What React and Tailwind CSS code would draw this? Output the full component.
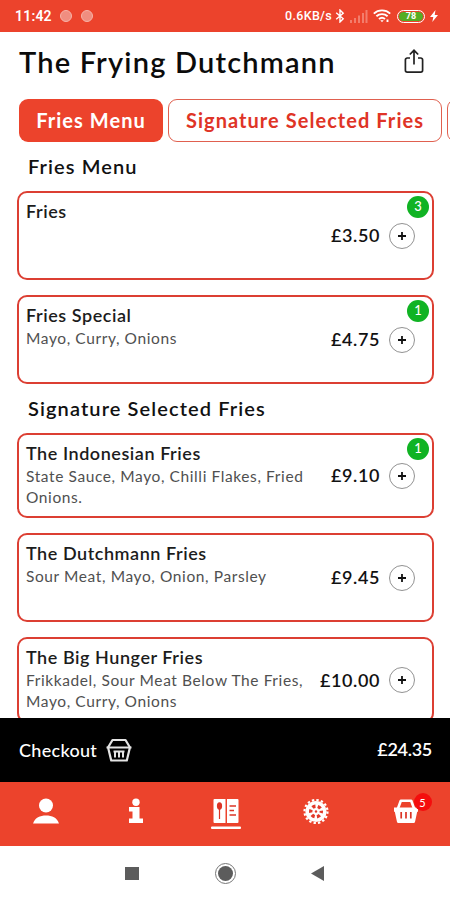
import React from 'react';

const MENU = [
  {
    title: 'Fries Menu',
    items: [
      { name: 'Fries', price: '£3.50', count: 3, height: 'h-[89px]' },
      { name: 'Fries Special', desc: 'Mayo, Curry, Onions', price: '£4.75', count: 1, height: 'h-[89px]' },
    ],
  },
  {
    title: 'Signature Selected Fries',
    items: [
      { name: 'The Indonesian Fries', desc: 'State Sauce, Mayo, Chilli Flakes, Fried Onions.', price: '£9.10', count: 1, height: 'h-[85px]' },
      { name: 'The Dutchmann Fries', desc: 'Sour Meat, Mayo, Onion, Parsley', price: '£9.45', height: 'h-[89px]' },
      { name: 'The Big Hunger Fries', desc: 'Frikkadel, Sour Meat Below The Fries, Mayo, Curry, Onions', price: '£10.00', height: 'h-[86px]' },
    ],
  },
];

function StatusBar() {
  return (
    <div className="flex h-8 shrink-0 items-center bg-[#ec432c] pl-[15px] pr-3 font-['Roboto',sans-serif] text-white">
      <span className="text-[14px] font-semibold tracking-[0.2px]">11:42</span>
      <span className="ml-2 h-3 w-3 rounded-full border border-[#f7b3a8] bg-[#f08e80]" />
      <span className="ml-[9px] h-3 w-3 rounded-full border border-[#f7b3a8] bg-[#f08e80]" />
      <span className="ml-auto text-[12.5px] font-medium tracking-[0.3px]">0.6KB/s</span>
      <svg className="ml-[3px]" width="10" height="14" viewBox="0 0 10 14" fill="none" stroke="white" strokeWidth="1.4">
        <path d="M1.2 3.8 8.2 9.8 5 13V1l3.2 3.2L1.2 10.2" />
      </svg>
      <svg className="ml-[5px]" width="18" height="13" viewBox="0 0 18 13" fill="#f37d6c">
        <path d="M0 10h2v3H0zM4 8h2v5H4zM8 5.500h2V13H8zM12 3h2v10h-2zM15.500 0h2v13h-2z" />
      </svg>
      <svg className="ml-[5px]" width="18" height="14" viewBox="0 0 18 14" fill="none" stroke="white" strokeWidth="1.9">
        <path d="M.8 4.600a12 12 0 0 1 16.400 0M3.400 7.300a8.200 8.200 0 0 1 11.200 0M6 10a4.500 4.500 0 0 1 6 0" />
        <path d="m7.300 11.300 1.700 2 1.700-2z" fill="white" stroke="none" />
        <path d="M14.500 10.500V13" />
      </svg>
      <span className="ml-[6px] flex h-[13px] w-7 items-center rounded-full border border-white p-px">
        <span className="flex h-full w-full items-center justify-center rounded-full bg-[#55ad25] text-[9px] font-bold leading-none">78</span>
      </span>
      <svg className="ml-[5px]" width="8" height="12" viewBox="0 0 8 12" fill="white">
        <path d="M5.500 0 0 7h3.300L2.300 12 8 5H4.700z" />
      </svg>
    </div>
  );
}

function Card({ item }) {
  return (
    <div className={`relative flex shrink-0 rounded-[10px] border-2 border-[#dc3f33] pl-[7px] pr-[17px] ${item.height}`}>
      <div className="w-[290px] pt-[7px]">
        <div className="pb-px text-[18px] font-semibold leading-[23px] tracking-[0.55px] text-[#1c1c1c]">{item.name}</div>
        <div className="text-[15.5px] leading-[21px] tracking-[0.6px] text-[#505050]">{item.desc}</div>
      </div>
      <div className="flex flex-1 items-center justify-end gap-[9px]">
        <span className="-ml-6 whitespace-nowrap text-[18px] font-semibold tracking-[0.6px] text-[#111]">{item.price}</span>
        <button className="flex h-[26px] w-[26px] shrink-0 items-center justify-center rounded-full border border-[#929292]">
          <svg width="8" height="8" viewBox="0 0 8 8" stroke="#111" strokeWidth="1.8">
            <path d="M4 0v8M0 4h8" />
          </svg>
        </button>
      </div>
      {item.count && (
        <span className="absolute right-[3px] top-[3px] flex h-[22px] w-[22px] items-center justify-center rounded-full bg-[#10b323] text-[13px] font-medium text-white">
          {item.count}
        </span>
      )}
    </div>
  );
}

function NavBar() {
  return (
    <nav className="grid h-16 shrink-0 grid-cols-5 justify-items-center bg-[#ec432c] pt-4 text-white">
      <svg className="ml-px" width="26" height="28" viewBox="0 0 26 28" fill="white">
        <circle cx="13" cy="7.500" r="7" />
        <path d="M0 25.500C2 19.500 7 17.500 13 17.500s11 2 13 8z" />
      </svg>
      <svg className="ml-px" width="16" height="26" viewBox="0 0 16 26" fill="white">
        <circle cx="8" cy="4.300" r="3.700" />
        <path d="M1 9h10.500v11.500H15V25H1v-4.500h3.500v-7H1z" />
      </svg>
      <svg className="ml-px" width="30" height="32" viewBox="0 0 30 32" fill="white">
        <path d="M3.500 1h11v24h-11a1 1 0 0 1-1-1V2a1 1 0 0 1 1-1zM16 1h10.500a1 1 0 0 1 1 1v22a1 1 0 0 1-1 1H16z" />
        <ellipse cx="8.500" cy="8" rx="2.600" ry="3.700" fill="#dc3426" />
        <path d="M8.500 11v10" stroke="#dc3426" strokeWidth="1.200" />
        <path d="M18.500 8H25M18.500 12.500H23M18.500 17H25" stroke="#dc3426" strokeWidth="1.700" />
        <rect x="0" y="28.500" width="30" height="2.500" rx="1" />
      </svg>
      <svg className="ml-px" width="26" height="28" viewBox="0 0 26 28">
        <circle cx="13" cy="13.500" r="11.500" fill="none" stroke="white" strokeWidth="2.200" strokeDasharray="2.400 2.116" />
        <circle cx="13" cy="13.500" r="10.600" fill="white" />
        <circle cx="13" cy="13.500" r="5.300" fill="none" stroke="#e2392a" strokeWidth="3.400" strokeDasharray="3.200 2.350" strokeDashoffset="1.600" />
        <circle cx="13" cy="13.500" r="1.200" fill="#e2392a" />
      </svg>
      <div className="relative ml-px">
        <svg width="26" height="28" viewBox="0 0 26 28" fill="white">
          <path d="M4.800 11 7.800 2.800h10.400l3 8.200" fill="none" stroke="white" strokeWidth="2.600" strokeLinejoin="round" />
          <path d="M1 9.500h24v4.300h-.8L22 24q-.3 1-1.300 1H5.300q-1 0-1.300-1L1.800 13.800H1z" />
          <path d="M8.200 14v6.500M13 14v6.500M17.800 14v6.500" stroke="#dc3426" strokeWidth="1.700" />
        </svg>
        <span className="absolute -right-[13px] -top-[5px] flex h-[18px] w-[18px] items-center justify-center rounded-full bg-[#f40d0d] text-[11px] leading-none">5</span>
      </div>
    </nav>
  );
}

export default function App() {
  return (
    <div className="flex h-[900px] w-[450px] flex-col overflow-hidden bg-white font-['Lato',sans-serif]">
      <StatusBar />

      <header className="flex h-[67px] shrink-0 items-start justify-between pl-[19px] pr-[26px]">
        <h1 className="pt-3 text-[29px] font-semibold leading-[36px] tracking-[1.2px] text-[#0b0b0b]">The Frying Dutchmann</h1>
        <svg className="mt-[17px]" width="20" height="25" viewBox="0 0 20 25" fill="none" stroke="#222" strokeWidth="1.7">
          <path d="M6 9H3.200a1.800 1.800 0 0 0-1.800 1.800v10.500a1.800 1.800 0 0 0 1.800 1.800h13.600a1.800 1.800 0 0 0 1.800-1.800V10.800A1.800 1.800 0 0 0 16.800 9H14" />
          <path d="M10 15.500V1.500M5.800 5.500 10 1.300l4.200 4.200" />
        </svg>
      </header>

      <div className="flex h-[43px] shrink-0 gap-[5px] overflow-hidden pl-[19px] text-[20px] font-bold tracking-[1.05px]">
        <button className="w-36 shrink-0 whitespace-nowrap rounded-[9px] bg-[#ec432c] pb-0.5 text-white">Fries Menu</button>
        <button className="w-[274px] shrink-0 whitespace-nowrap rounded-[9px] border border-[#e0604f] pb-0.5 text-[#df3426]">Signature Selected Fries</button>
        <button className="w-36 shrink-0 rounded-[9px] border border-[#e0604f]" />
      </div>

      <main className="flex min-h-0 flex-1 flex-col overflow-hidden pl-[17px] pr-4">
        {MENU.map((section) => (
          <section key={section.title} className="shrink-0">
            <h2 className="h-[49px] pl-[11px] pt-3 text-[20px] font-semibold leading-6 tracking-[1.1px] text-[#111]">{section.title}</h2>
            <div className="flex flex-col gap-[15px]">
              {section.items.map((item) => (
                <Card key={item.name} item={item} />
              ))}
            </div>
          </section>
        ))}
      </main>

      <div className="flex h-16 shrink-0 items-center bg-black pl-[19px] pr-[18px] text-white">
        <span className="text-[18px] font-medium tracking-[0.3px]">Checkout</span>
        <svg className="ml-[9px]" width="26" height="24" viewBox="0 0 26 24" fill="none" stroke="#e4e4e4" strokeWidth="2.200" strokeLinejoin="round">
          <path d="M2 9.500 6.500 2h13L24 9.500" />
          <path d="M.5 9.500h25M2.200 10l3 12.500h15.600l3-12.500" />
          <path d="M9 13v6.500M13 13v6.500M17 13v6.500M7.500 13.500h11" strokeWidth="2" />
        </svg>
        <span className="ml-auto pb-0.5 text-[18px] font-semibold tracking-[-0.3px]">£24.35</span>
      </div>

      <NavBar />

      <div className="grid h-[54px] shrink-0 grid-cols-[1fr_62px_1fr] items-center bg-white">
        <span className="ml-auto mr-[55px] h-[13px] w-[14px] bg-[#5c5c5c]" />
        <span className="mx-auto flex h-[21px] w-[21px] items-center justify-center rounded-full border-[1.5px] border-[#777]">
          <span className="h-[15px] w-[15px] rounded-full bg-[#5c5c5c]" />
        </span>
        <svg className="ml-[55px]" width="13" height="15" viewBox="0 0 13 15" fill="#5c5c5c">
          <path d="M13 0v15L0 7.500z" />
        </svg>
      </div>
    </div>
  );
}
